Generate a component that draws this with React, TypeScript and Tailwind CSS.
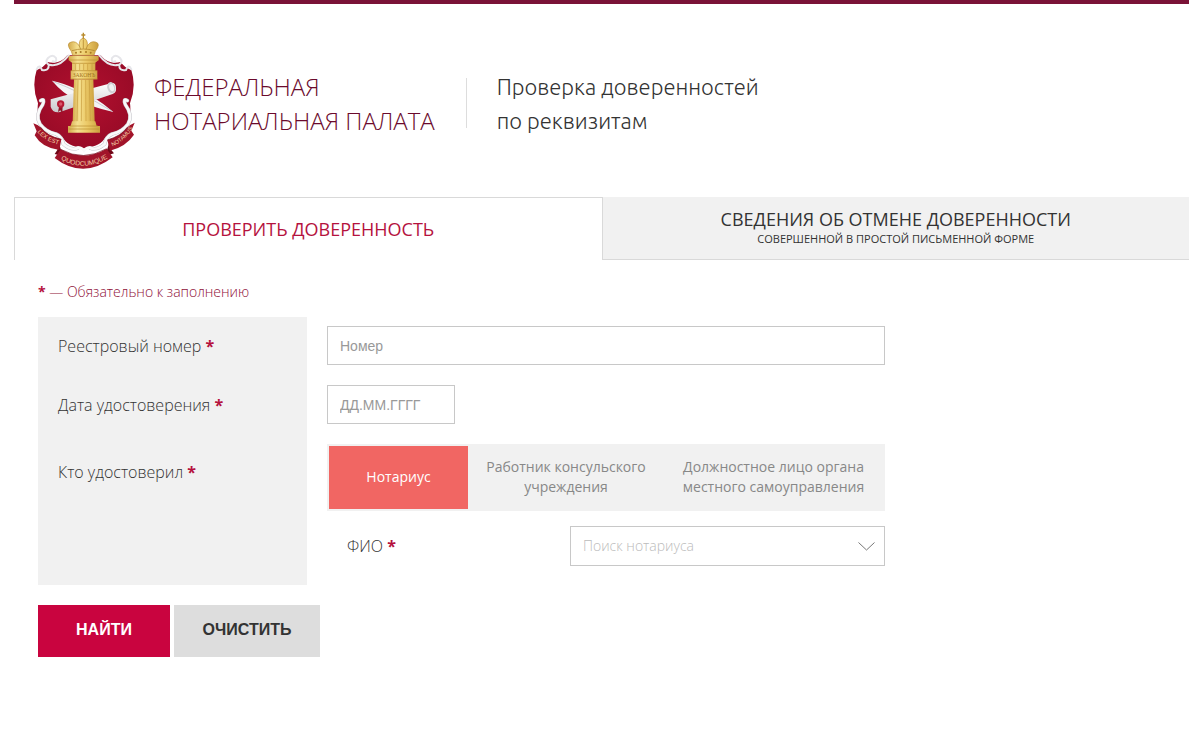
import { useState } from "react";
import type { FormEvent } from "react";

const certifiers = [
  { id: "notary", lines: ["Нотариус"] },
  { id: "consul", lines: ["Работник консульского", "учреждения"] },
  { id: "official", lines: ["Должностное лицо органа", "местного самоуправления"] },
];

function Required() {
  return <span className="font-bold text-[#b5123e]">*</span>;
}

function Emblem() {
  return (
    <svg
      className="h-[138px] w-[104px] shrink-0"
      viewBox="36 36 312 414"
      role="img"
      aria-label="Герб Федеральной нотариальной палаты"
    >
      <defs>
        <linearGradient id="gold" x1="0" x2="1">
          <stop offset="0" stopColor="#d3a94a" />
          <stop offset="0.3" stopColor="#f5e08f" />
          <stop offset="0.6" stopColor="#ecca68" />
          <stop offset="1" stopColor="#cb9f3e" />
        </linearGradient>
        <radialGradient id="shield" cx="0.5" cy="0.45" r="0.6">
          <stop offset="0" stopColor="#b3102f" />
          <stop offset="1" stopColor="#960a26" />
        </radialGradient>
        <linearGradient id="paper" x1="0" x2="0" y1="0" y2="1">
          <stop offset="0" stopColor="#ffffff" />
          <stop offset="1" stopColor="#c9c9cc" />
        </linearGradient>
        <path id="mottoLeft" d="M52 336 Q74 364 124 376" />
        <path id="mottoMid" d="M118 416 Q190 460 268 412" />
        <path id="mottoRight" d="M266 384 Q318 366 344 314" />
      </defs>

      {/* shield */}
      <path
        d="M82 126 Q118 136 142 106 L242 106 Q266 136 302 126 Q312 142 334 150 Q350 200 330 250 Q336 296 310 328 Q280 342 256 352 Q244 378 192 386 Q140 378 128 352 Q104 342 74 328 Q48 296 54 250 Q34 200 50 150 Q72 142 82 126Z"
        fill="url(#shield)"
      />

      {/* scrolled white edging */}
      <g fill="none" stroke="#e6e6ea" strokeWidth="6" strokeLinecap="round">
        <path d="M50 148 Q58 130 66 150 Q88 154 86 134 Q74 126 84 114 Q98 100 108 114 Q112 128 98 124 M88 134 Q118 142 146 106" />
        <path d="M334 148 Q326 130 318 150 Q296 154 298 134 Q310 126 300 114 Q286 100 276 114 Q272 128 286 124 M296 134 Q266 142 238 106" />
      </g>
      <g fill="none" stroke="#c4c4ca" strokeWidth="11" strokeLinecap="round">
        <path d="M62 242 Q76 234 68 254 Q44 286 60 312 Q78 336 108 342 Q126 350 130 372 Q152 392 174 384" />
        <path d="M322 242 Q308 234 316 254 Q340 286 324 312 Q306 336 276 342 Q258 350 254 372 Q232 392 210 384" />
      </g>
      <g fill="none" stroke="#fafafa" strokeWidth="8" strokeLinecap="round">
        <path d="M62 242 Q76 234 68 254 Q44 286 60 312 Q78 336 108 342 Q126 350 130 372 Q152 392 174 384" />
        <path d="M322 242 Q308 234 316 254 Q340 286 324 312 Q306 336 276 342 Q258 350 254 372 Q232 392 210 384" />
        <path d="M166 386 Q182 378 192 392 Q202 378 218 386" />
      </g>

      {/* quill */}
      <path d="M96 182 Q134 190 162 204 Q222 226 280 276 Q214 262 166 238 Q128 220 96 182Z" fill="#f4f4f6" />
      <path d="M98 184 Q180 214 278 275" fill="none" stroke="#b8b8c0" strokeWidth="2" />
      {/* rolled deed */}
      <path d="M92 238 L264 192 Q288 182 288 204 Q290 218 278 222 L120 276 Q98 280 92 260Z" fill="url(#paper)" />
      <ellipse cx="274" cy="203" rx="12" ry="17" fill="#cfcfd3" transform="rotate(-16 274 203)" />
      <ellipse cx="275" cy="203" rx="7" ry="11" fill="#f2f2f2" transform="rotate(-16 275 203)" />
      <path d="M118 256 L114 276 L121 271 L127 280 L128 256Z" fill="#8e1326" />
      <circle cx="122" cy="252" r="11" fill="#b71a34" />
      <circle cx="122" cy="252" r="5" fill="#d9566a" />

      {/* column */}
      <path d="M162 178 H220 L224 306 H158Z" fill="url(#gold)" />
      <path
        d="M174 180 L171 304 M185 180 L184 304 M197 180 L198 304 M208 180 L211 304"
        stroke="#c79b3c"
        strokeWidth="2"
      />
      <path d="M156 304 H226 L230 318 H240 V338 H144 V318 H152Z" fill="url(#gold)" />
      <path d="M150 318 H234 M146 327 H238" stroke="#b98b2d" strokeWidth="2" />
      <path d="M146 108 H236 V120 L226 128 V152 H232 V178 H152 V152 H156 V128 L146 120Z" fill="url(#gold)" />
      <path d="M146 120 H236 M156 130 H226 M152 152 H232 M152 177 H232" stroke="#b98b2d" strokeWidth="2" />
      <path d="M166 132 V150 M179 132 V150 M191 132 V150 M203 132 V150 M216 132 V150" stroke="#c79b3c" strokeWidth="2" />
      <text x="192" y="171" textAnchor="middle" fontSize="17" fontFamily="Liberation Serif, serif" fill="#a27521">
        ЗАКОНЪ
      </text>

      {/* crown */}
      <path
        d="M158 106 L154 94 Q136 70 154 66 Q168 62 178 78 Q176 58 190 54 Q204 58 202 78 Q212 62 226 66 Q244 70 226 94 L222 106Z"
        fill="url(#gold)"
        stroke="#b98b2d"
        strokeWidth="2"
      />
      <path d="M190 38 V56 M184 45 H196" stroke="#b98b2d" strokeWidth="4" />
      <path d="M156 92 Q190 82 224 92 M178 78 L182 88 M202 78 L198 88 M190 58 V86" fill="none" stroke="#a87a22" strokeWidth="2" />
      <g fill="#a87a22">
        <circle cx="168" cy="98" r="3" />
        <circle cx="182" cy="96" r="3" />
        <circle cx="198" cy="96" r="3" />
        <circle cx="212" cy="98" r="3" />
      </g>

      {/* motto ribbon */}
      <path d="M116 366 L128 408 L104 402 L112 390Z M268 366 L256 408 L282 400 L272 388Z" fill="#6e0818" />
      <path d="M40 310 Q54 314 62 322 Q80 348 124 358 L118 390 Q66 384 44 346 L50 334Z" fill="#a1142a" />
      <path d="M344 308 Q330 314 322 322 Q304 348 262 360 L270 392 Q318 380 342 344 L334 332Z" fill="#a1142a" />
      <path d="M122 388 Q190 426 260 386 L278 412 Q190 480 104 414Z" fill="#a1142a" />
      <path d="M122 388 Q190 426 260 386 M62 322 Q80 348 124 358 M322 322 Q304 348 262 360" fill="none" stroke="#6e0818" strokeWidth="2" />
      <g fontFamily="Liberation Sans, sans-serif" fontSize="18" fill="#f3cfa6">
        <text>
          <textPath href="#mottoLeft">LEX EST</textPath>
        </text>
        <text fontSize="20" textAnchor="middle">
          <textPath href="#mottoMid" startOffset="50%">QUODCUMQUE</textPath>
        </text>
        <text fontSize="17" textAnchor="middle">
          <textPath href="#mottoRight" startOffset="50%">NOTAMUS</textPath>
        </text>
      </g>
    </svg>
  );
}

export default function App() {
  const [certifier, setCertifier] = useState("notary");

  const handleSubmit = (e: FormEvent) => {
    e.preventDefault();
  };

  return (
    <div className="mr-[11px] ml-[14px] bg-white pb-20 font-['Open_Sans',sans-serif] text-[#333]">
      <header className="flex items-center border-t-4 border-[#7a1237] pt-7 pb-[27px] pl-[18px]">
        <Emblem />
        <h1 className="ml-[18px] pt-1.5 text-2xl leading-[34px] font-light whitespace-nowrap text-[#6b0a2c]">
          ФЕДЕРАЛЬНАЯ
          <br />
          НОТАРИАЛЬНАЯ ПАЛАТА
        </h1>
        <div className="mt-1 ml-[31px] h-[50px] w-px bg-[#ddd]" />
        <p className="ml-[30px] pt-1.5 font-[Ubuntu,'Noto_Sans',sans-serif] text-[22px] leading-[34px] font-light whitespace-nowrap text-[#333]">
          Проверка доверенностей
          <br />
          по реквизитам
        </p>
      </header>

      <nav className="grid h-[63px] grid-cols-2 text-center text-lg font-medium">
        <button type="button" className="border-t border-l border-[#d9d9d9] text-[#b5123e]">
          ПРОВЕРИТЬ ДОВЕРЕННОСТЬ
        </button>
        <button type="button" className="border-b border-l border-[#d9d9d9] bg-[#f1f1f1] pt-0.5 leading-5">
          СВЕДЕНИЯ ОБ ОТМЕНЕ ДОВЕРЕННОСТИ
          <span className="block text-[11px] font-normal">СОВЕРШЕННОЙ В ПРОСТОЙ ПИСЬМЕННОЙ ФОРМЕ</span>
        </button>
      </nav>

      <form className="px-6 pt-5" onSubmit={handleSubmit}>
        <p className="text-sm leading-6 font-light text-[#8f0f38]">
          <Required /> — Обязательно к заполнению
        </p>

        <div className="mt-[13px] grid grid-cols-[269px_minmax(0,558px)] gap-x-5 leading-6">
          <div className="flex flex-col gap-[35px] bg-[#f1f1f1] px-5 pt-[17px] font-light">
            <label htmlFor="number">
              Реестровый номер <Required />
            </label>
            <label htmlFor="date">
              Дата удостоверения <Required />
            </label>
            <span id="certifier-label" className="pt-2">
              Кто удостоверил <Required />
            </span>
          </div>

          <div className="flex flex-col items-start pt-[9px] pb-[19px]">
            <input
              id="number"
              type="text"
              placeholder="Номер"
              className="h-[39px] w-full border border-[#c8c8c8] px-3 font-['Liberation_Sans',sans-serif] text-sm outline-none placeholder:text-[#999]"
            />
            <input
              id="date"
              type="text"
              placeholder="ДД.ММ.ГГГГ"
              className="mt-5 h-[39px] w-32 border border-[#c8c8c8] px-3 font-['Liberation_Sans',sans-serif] text-sm outline-none placeholder:text-[#999]"
            />

            <div
              role="radiogroup"
              aria-labelledby="certifier-label"
              className="mt-5 grid w-full grid-cols-[139fr_196fr_219fr] bg-[#f1f1f1] p-0.5 text-center text-sm leading-5 text-[#888]"
            >
              {certifiers.map(({ id, lines }) => (
                <label
                  key={id}
                  className="relative flex h-[63px] cursor-pointer flex-col justify-center pb-0.5 whitespace-nowrap has-checked:bg-[#f16663] has-checked:text-white"
                >
                  <input
                    type="radio"
                    name="certifier"
                    value={id}
                    checked={certifier === id}
                    onChange={() => setCertifier(id)}
                    className="sr-only"
                  />
                  {lines.map((line) => (
                    <span key={line}>{line}</span>
                  ))}
                </label>
              ))}
            </div>

            <div className="mt-[15px] flex w-full items-center justify-between pl-5">
              <label htmlFor="notary-name" className="font-light">
                ФИО <Required />
              </label>
              <div className="relative w-[315px]">
                <select
                  id="notary-name"
                  defaultValue=""
                  className="block h-10 w-full appearance-none border border-[#c8c8c8] bg-white px-3 text-sm font-light text-[#bbb] outline-none"
                >
                  <option value="">Поиск нотариуса</option>
                </select>
                <svg
                  className="pointer-events-none absolute top-4 right-2.5 h-[9px] w-[17px]"
                  viewBox="0 0 17 9"
                  fill="none"
                  stroke="#777"
                >
                  <path d="M0.5 0.5 8.5 8 16.5 0.5" />
                </svg>
              </div>
            </div>
          </div>
        </div>

        <div className="mt-5 flex gap-1 font-['Liberation_Sans',sans-serif] font-bold">
          <button type="submit" className="h-[52px] w-[132px] bg-[#c9043f] pb-0.5 text-white">
            НАЙТИ
          </button>
          <button type="reset" className="h-[52px] w-[146px] bg-[#ddd] pb-0.5 text-[#333]">
            ОЧИСТИТЬ
          </button>
        </div>
      </form>
    </div>
  );
}
